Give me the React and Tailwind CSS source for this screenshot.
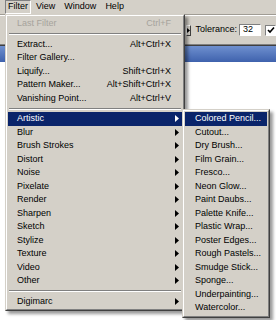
import React from "react";

const F = "font-['Liberation_Sans',Arial,sans-serif]";

function Arrow({ white }) {
  return (
    <svg width="4" height="7" viewBox="0 0 4 7" className="shrink-0">
      <path d="M0 0 L4 3.5 L0 7 Z" fill={white ? "#ffffff" : "#000000"} />
    </svg>
  );
}

function Sep() {
  return (
    <div className="h-[7px] flex items-center px-[1px]">
      <div className="w-full border-t border-t-[#808080] border-b border-b-white" />
    </div>
  );
}

function Row({ label, sc, arrow, hi, disabled }) {
  return (
    <div
      className={`flex items-center h-[13.5px] pl-[9px] ${arrow ? "pr-[3px]" : "pr-[11px]"} ${
        hi ? "bg-[#0a246a] text-white" : disabled ? "text-[#a6a39c]" : "text-black"
      }`}
    >
      <span className="flex-1 whitespace-nowrap leading-none">{label}</span>
      {sc && <span className="whitespace-nowrap leading-none">{sc}</span>}
      {arrow && <Arrow white={hi} />}
    </div>
  );
}

const subs = [
  "Artistic",
  "Blur",
  "Brush Strokes",
  "Distort",
  "Noise",
  "Pixelate",
  "Render",
  "Sharpen",
  "Sketch",
  "Stylize",
  "Texture",
  "Video",
  "Other",
];

const artistic = [
  "Colored Pencil...",
  "Cutout...",
  "Dry Brush...",
  "Film Grain...",
  "Fresco...",
  "Neon Glow...",
  "Paint Daubs...",
  "Palette Knife...",
  "Plastic Wrap...",
  "Poster Edges...",
  "Rough Pastels...",
  "Smudge Stick...",
  "Sponge...",
  "Underpainting...",
  "Watercolor...",
];

export default function App() {
  return (
    <div className={`relative w-[276px] h-[320px] overflow-hidden bg-white ${F} text-[9px]`}>
      {/* menubar */}
      <div className="h-[15px] bg-[#d4d0c8] border-b border-b-[#a09c94] flex items-center text-black">
        <div className="ml-[5px] h-[14px] w-[26px] flex items-center pl-[2px] border-t border-l border-t-[#808080] border-l-[#808080] border-r border-b border-r-white border-b-white">
          Filter
        </div>
        <span className="ml-[5px]">View</span>
        <span className="ml-[9px]">Window</span>
        <span className="ml-[9px]">Help</span>
      </div>
      {/* toolbar */}
      <div className="h-[29px] bg-[#d4d0c8] border-t border-t-white flex items-center pl-[186px]">
        <div className="w-[11px] h-[11px] bg-[#d4d0c8] border border-t-white border-l-white border-r-[#404040] border-b-[#404040] flex items-center justify-center">
          <svg width="3" height="5" viewBox="0 0 3 5">
            <path d="M0 0 L3 2.5 L0 5 Z" fill="#000" />
          </svg>
        </div>
        <span className="ml-[4px] text-black whitespace-nowrap">Tolerance:</span>
        <div className="ml-[2px] w-[22px] h-[12px] shrink-0 bg-white border border-t-[#808080] border-l-[#808080] border-r-white border-b-white flex items-center pl-[3px] text-black">
          32
        </div>
        <div className="ml-[4px] w-[11px] h-[11px] shrink-0 bg-white border border-t-[#808080] border-l-[#808080] border-r-white border-b-white flex items-center justify-center">
          <svg width="8" height="8" viewBox="0 0 8 8">
            <path d="M1 4 L3 6 L7 1.5" stroke="#000" strokeWidth="1.6" fill="none" />
          </svg>
        </div>
      </div>
      <div className="h-[2px] bg-[#808080] border-b border-b-[#404040]" />
      {/* title band */}
      <div className="h-[16px] bg-gradient-to-b from-[#6f90cf] to-[#3f62ad]" />

      {/* main menu */}
      <div className="absolute left-[5px] top-[14px] w-[180px] bg-[#d4d0c8] border border-t-[#d4d0c8] border-l-[#d4d0c8] border-r-[#404040] border-b-[#404040] shadow-[3px_3px_3px_rgba(0,0,0,0.4)]">
        <div className="border border-t-white border-l-white border-r-[#808080] border-b-[#808080] p-[1px]">
          <Row label="Last Filter" sc="Ctrl+F" disabled />
          <Sep />
          <Row label="Extract..." sc="Alt+Ctrl+X" />
          <Row label="Filter Gallery..." />
          <Row label="Liquify..." sc="Shift+Ctrl+X" />
          <Row label="Pattern Maker..." sc="Alt+Shift+Ctrl+X" />
          <Row label="Vanishing Point..." sc="Alt+Ctrl+V" />
          <Sep />
          {subs.map((s, i) => (
            <Row key={s} label={s} arrow hi={i === 0} />
          ))}
          <Sep />
          <Row label="Digimarc" arrow />
        </div>
      </div>

      {/* submenu */}
      <div className="absolute left-[182px] top-[109px] w-[88px] bg-[#d4d0c8] border border-t-[#d4d0c8] border-l-[#d4d0c8] border-r-[#404040] border-b-[#404040] shadow-[3px_3px_3px_rgba(0,0,0,0.4)]">
        <div className="border border-t-white border-l-white border-r-[#808080] border-b-[#808080] p-[1px]">
          {artistic.map((s, i) => (
            <div
              key={s}
              className={`flex items-center h-[13.5px] pl-[10px] whitespace-nowrap leading-none ${
                i === 0 ? "bg-[#0a246a] text-white" : "text-black"
              }`}
            >
              {s}
            </div>
          ))}
        </div>
      </div>
    </div>
  );
}
